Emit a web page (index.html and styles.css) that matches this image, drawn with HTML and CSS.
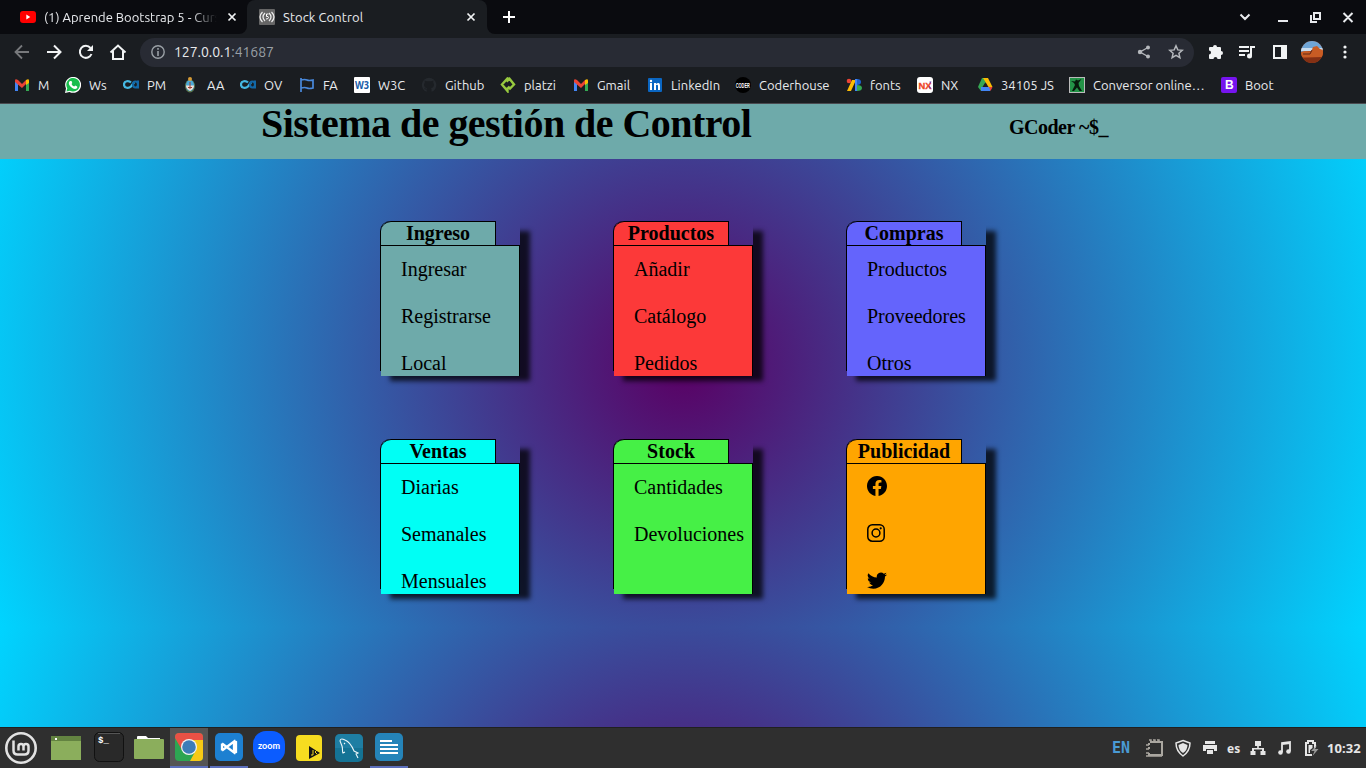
FILE: index.html
```html
<!DOCTYPE html>
<html lang="es">
<head>
<meta charset="utf-8">
<title>Stock Control</title>
<link rel="stylesheet" href="styles.css">
</head>
<body>
<div class="screen">
<svg class="defs" width="0" height="0"><defs>
<g id="close"><path d="M4 4l8 8M12 4l-8 8" stroke="#f1f3f4" stroke-width="2"/></g>
<g id="gmail"><path d="M1 14V4l3 2v8z" fill="#4285f4"/><path d="M12 14V6l3-2v10z" fill="#34a853"/><path d="M1 4c0-2 1-2 3-1l4 4 4-4v4l-4 4-7-6z" fill="#ea4335"/><path d="M12 3c2-1 3-1 3 1v2l-3 2z" fill="#fbbc04"/></g>
<g id="ca" fill="none" stroke-width="2.2"><path d="M8 5.500C6 3.500 1 3.500 1 7.500s5 4 7 2l3-4" stroke="#45b8e2"/><path d="M15 3.500v8M15 7.500c0-4-5-4-5 0s5 4 5 0" stroke="#1268a8"/></g>
</defs></svg>

<header class="browser">
<div class="tabs">
<div class="tab-idle"><svg class="i16" viewBox="0 0 16 16"><rect y="2" width="16" height="12" rx="3" fill="#f00"/><path d="M6.300 5.500v5l4-2.500z" fill="#fff"/></svg><span class="tab-title faded">(1) Aprende Bootstrap 5 - Curs</span><svg class="i14" viewBox="0 0 16 16"><use href="#close"/></svg></div>
<div class="tab-shell"><div class="tab-active"><svg class="i16" viewBox="0 0 16 16"><rect width="16" height="16" rx="1" fill="#666"/><path d="M3.500 3q-5 5 0 10M6 4q-4 4 0 8M12.500 3q5 5 0 10M10 4q4 4 0 8" fill="none" stroke="#eee" stroke-width="1.200"/><path d="M9.500 5h-2v2.500q2-.5 2 1T7 10" fill="none" stroke="#fff"/></svg><span class="tab-title">Stock Control</span><svg class="i14" viewBox="0 0 16 16"><use href="#close"/></svg></div></div>
<div class="strip"><svg class="i16" viewBox="0 0 16 16"><path d="M8 2v12M2 8h12" stroke="#fff" stroke-width="2"/></svg>
<svg class="window-controls" width="120" height="20" viewBox="0 0 120 20" fill="none" stroke="#e8eaed" stroke-width="2"><path d="M4.500 7.500l4.500 4.500 4.500-4.500M42 14h10M107.500 6l9 9M116.500 6l-9 9"/><path d="M78 6h6v6h-6zM75 8v7h6"/></svg></div>
</div>
<div class="toolbar">
<nav class="navigation">
<svg class="i16" viewBox="0 0 16 16" fill="none" stroke="#77797c" stroke-width="1.800"><path d="M15 8H2M8 1.500L1.500 8 8 14.500"/></svg>
<svg class="i16" viewBox="0 0 16 16" fill="none" stroke="#f1f3f4" stroke-width="2"><path d="M1 8h13M8 1.500L14.500 8 8 14.500"/></svg>
<svg class="i16" viewBox="0 0 16 16" fill="none" stroke="#f1f3f4" stroke-width="2"><path d="M13.500 10A6 6 0 1 1 12.500 4"/><path d="M15 1v6H9z" fill="#f1f3f4" stroke="none"/></svg>
<svg class="i18 home" viewBox="0 0 18 18" fill="none" stroke="#f1f3f4" stroke-width="2"><path d="M1.500 9.500L9 2.500l7.500 7M4 8v8h10V8"/></svg>
</nav>
<div class="address"><svg class="i14" viewBox="0 0 14 14"><circle cx="7" cy="7" r="6.200" fill="none" stroke="#9aa0a6" stroke-width="1.400"/><path d="M7 3v1.700M7 6v5" stroke="#9aa0a6" stroke-width="1.600"/></svg><span class="url">127.0.0.1<span class="port">:41687</span></span>
<svg class="i14 share" viewBox="0 0 14 14" fill="#b5b8bc"><path d="M11 2.500L3 7l8 4.500" fill="none" stroke="#b5b8bc" stroke-width="1.400"/><circle cx="11" cy="2.500" r="2"/><circle cx="3" cy="7" r="2.200"/><circle cx="11" cy="11.500" r="2"/></svg>
<svg class="i16" viewBox="0 0 16 16" fill="none" stroke="#b5b8bc" stroke-width="1.500"><path d="M8 1.800l1.800 4.100 4.500.4-3.400 3 1 4.400L8 11.400l-3.900 2.300 1-4.400-3.400-3 4.500-.4z"/></svg></div>
<div class="extensions">
<svg class="i16" viewBox="0 0 16 16" fill="#f1f3f4"><path d="M1 4q0-1 1-1h3a2 2 0 0 1 4 0h3q1 0 1 1v3a2 2 0 0 1 0 4v3q0 1-1 1H9.500a2 2 0 0 0-4 0H2q-1 0-1-1v-3.500a2 2 0 0 0 0-4z"/></svg>
<svg class="i16" viewBox="0 0 16 16" fill="#f1f3f4"><path d="M0 2h10v2H0zM0 6h10v2H0zM0 10h6v2H0zM11 2h5v2h-3v8h-2z"/><circle cx="10.500" cy="12" r="2.500"/></svg>
<svg class="i16 panel" viewBox="0 0 16 16"><path d="M1 1h14v14H1zM3 3v10h6V3z" fill="#f1f3f4" fill-rule="evenodd"/></svg>
<svg class="avatar" viewBox="0 0 22 22"><clipPath id="round"><circle cx="11" cy="11" r="11"/></clipPath><g clip-path="url(#round)"><path d="M0 0h22v22H0z" fill="#b34a1e"/><path d="M0 0h22v8L0 11z" fill="#6fa5d5"/><path d="M0 7h22v3H0z" fill="#c9dced"/><path d="M0 11l4-1 6 1 2-5 4-1 3 3 3 1v7H0z" fill="#c85c24"/><path d="M2 13l7 0 2-4" stroke="#612817" fill="none"/><path d="M0 17l22-1v6H0z" fill="#843014"/></g></svg>
<svg class="i16" viewBox="0 0 16 16" fill="#f1f3f4"><circle cx="7" cy="3" r="1.600"/><circle cx="7" cy="8" r="1.600"/><circle cx="7" cy="13" r="1.600"/></svg>
</div>
</div>
<nav class="bookmarks">
<a><svg class="i16" viewBox="0 0 16 16"><use href="#gmail"/></svg>M</a>
<a><svg class="i16" viewBox="0 0 16 16"><path d="M0 16l1-4.500A8 8 0 1 1 4.500 15z" fill="#fff"/><path d="M1.400 14.600l.9-3.300a6.800 6.800 0 1 1 2.500 2.400z" fill="#18bd4c"/><path d="M5 4l1.500 0 .8 2-.8 1q1 2 2.700 2.600l1-1 2 1v1.300q-2 2-5 0Q3 8 4 5z" fill="#fff"/></svg>Ws</a>
<a><svg class="i16" viewBox="0 0 16 16"><use href="#ca"/></svg>PM</a>
<a><svg class="i16" viewBox="0 0 16 16"><ellipse cx="7" cy="9" rx="5" ry="6.500" fill="#58744d"/><ellipse cx="7" cy="8.500" rx="4" ry="5.500" fill="#4aaada"/><path d="M3 8.500h8q0 3-4 5.500-4-2.500-4-5.500z" fill="#f3ded3"/><circle cx="7" cy="2" r="2" fill="#d59b36"/><path d="M7 5v7M5 10.500h4" stroke="#963e32"/></svg>AA</a>
<a><svg class="i16" viewBox="0 0 16 16"><use href="#ca"/></svg>OV</a>
<a><svg class="i16" viewBox="0 0 16 16" fill="none" stroke="#4989dc" stroke-width="1.700"><path d="M2 1v14M2 3q4-1 6 0t6 0v8q-4 1-6 0t-6 0"/></svg>FA</a>
<a><svg class="i16" viewBox="0 0 16 16"><rect width="16" height="16" rx="1" fill="#fff"/><text x="1" y="12" class="w3" textLength="14" lengthAdjust="spacingAndGlyphs">W3</text></svg>W3C</a>
<a><svg class="i16" viewBox="0 0 16 16"><path d="M8 .8a7.200 7.200 0 0 0-2.300 14v-2.300q-2 .5-2.600-1.200l1.700.2.900.8.2-1.200Q3 10.500 3 7.500l.8-2-.2-2 2.200.8h4.400l2.200-.8-.2 2 .8 2q0 3-3 3.600l.5 1v2.700A7.200 7.200 0 0 0 8 .8z" fill="#25292e"/></svg>Github</a>
<a><svg class="i16" viewBox="0 0 16 16" fill="none" stroke="#98ca3f" stroke-width="2.400"><path d="M6.500 4.500L9.500 1.800 14 7.500l-4 4-2-2M9 2L7.500 1.500 2 7.500l5.500 6.500V10.500"/></svg>platzi</a>
<a><svg class="i16" viewBox="0 0 16 16"><use href="#gmail"/></svg>Gmail</a>
<a><svg class="i16" viewBox="0 0 16 16"><rect x="1" y="1" width="14" height="14" rx="1" fill="#0a66c2"/><path d="M3 6h2v7H3zM7 6h2v1q1-1 2.500-1Q13 6 13 9v4h-2V9q0-2-2-1v5H7z" fill="#fff"/><circle cx="4" cy="4" r="1.200" fill="#fff"/></svg>LinkedIn</a>
<a><svg class="i16" viewBox="0 0 16 16"><circle cx="8" cy="8" r="8" fill="#000"/><text x=".8" y="10.800" class="coder" textLength="14" lengthAdjust="spacingAndGlyphs">CODER</text></svg>Coderhouse</a>
<a><svg class="i16" viewBox="0 0 16 16"><circle cx="3" cy="4" r="2.300" fill="#ea4335"/><path d="M6 3h4L5 14H1z" fill="#fbbc04"/><path d="M9 2h3v12H9z" fill="#4285f4"/><path d="M11 2q4 0 4 3t-4 3z" fill="#1a63d5"/><path d="M11 8q5 0 5 3t-5 3z" fill="#34a853"/></svg>fonts</a>
<a><svg class="i16" viewBox="0 0 16 16"><rect width="16" height="16" rx="3" fill="#fff"/><text x="1.500" y="11.500" class="nx" textLength="13" lengthAdjust="spacingAndGlyphs">NX</text><path d="M12.500 4.500h2l-1.500 2.500zM12 8.500l2.500 3h-2z" fill="#6732a5"/></svg>NX</a>
<a><svg class="i16" viewBox="0 0 16 16"><path d="M5 1h6L4 14l-3-4z" fill="#34a853"/><path d="M6 1h5l4.500 9h-4z" fill="#fbbc04"/><path d="M4 10h11l-2 4H4z" fill="#4285f4"/><path d="M12 10h3.500l-2 4z" fill="#ea4335"/><path d="M8 6l2.500 4h-5z" fill="#1a1d21"/></svg>34105 JS</a>
<a><svg class="i16" viewBox="0 0 16 16"><rect x=".5" y=".5" width="15" height="15" fill="#239347" stroke="#bbb"/><path d="M12.500 2L9.500 6l.5 3 3 5h-2.500L8 10.500l-3 3.500H3l3-6-1-2-3-2 4 .5 1-2 2 1z" fill="#071b0c"/></svg>Conversor online…</a>
<a><svg class="i16" viewBox="0 0 16 16"><rect width="16" height="16" rx="2" fill="#7614ef"/><text x="4" y="12.300" class="boot">B</text></svg>Boot</a>
</nav>
</header>

<main class="page">
<header class="page-header"><h1>Sistema de gestión de Control</h1><p class="brand">GCoder ~$_</p></header>
<section class="folders">
<article class="folder teal"><h2>Ingreso</h2><ul><li>Ingresar</li><li>Registrarse</li><li>Local</li></ul></article>
<article class="folder red"><h2>Productos</h2><ul><li>Añadir</li><li>Catálogo</li><li>Pedidos</li></ul></article>
<article class="folder violet"><h2>Compras</h2><ul><li>Productos</li><li>Proveedores</li><li>Otros</li></ul></article>
<article class="folder cyan"><h2>Ventas</h2><ul><li>Diarias</li><li>Semanales</li><li>Mensuales</li></ul></article>
<article class="folder green"><h2>Stock</h2><ul><li>Cantidades</li><li>Devoluciones</li></ul></article>
<article class="folder orange social"><h2>Publicidad</h2><ul>
<li><svg width="20" height="20" viewBox="0 0 16 16"><path d="M16 8.049c0-4.446-3.582-8.050-8-8.050C3.580 0-.002 3.603-.002 8.050c0 4.017 2.926 7.347 6.750 7.951v-5.625h-2.030V8.050H6.750V6.275c0-2.017 1.195-3.131 3.022-3.131.876 0 1.791.157 1.791.157v1.980h-1.009c-.993 0-1.303.621-1.303 1.258v1.510h2.218l-.354 2.326H9.250V16c3.824-.604 6.750-3.934 6.750-7.951z"/></svg></li>
<li><svg width="18" height="18" viewBox="0 0 18 18" fill="none" stroke="#000" stroke-width="1.500"><rect x=".8" y=".8" width="16.400" height="16.400" rx="4.500"/><circle cx="9" cy="9" r="3.900"/><circle cx="13.700" cy="4.300" r="1.100" fill="#000" stroke="none"/></svg></li>
<li><svg width="20" height="20" viewBox="0 0 16 16"><path d="M5.026 15c6.038 0 9.341-5.003 9.341-9.334 0-.140 0-.282-.006-.422A6.685 6.685 0 0 0 16 3.542a6.658 6.658 0 0 1-1.889.518 3.301 3.301 0 0 0 1.447-1.817 6.533 6.533 0 0 1-2.087.793A3.286 3.286 0 0 0 7.875 6.030a9.325 9.325 0 0 1-6.767-3.429 3.289 3.289 0 0 0 1.018 4.382A3.323 3.323 0 0 1 .640 6.575v.045a3.288 3.288 0 0 0 2.632 3.218 3.203 3.203 0 0 1-.865.115 3.230 3.230 0 0 1-.614-.057 3.283 3.283 0 0 0 3.067 2.277A6.588 6.588 0 0 1 .780 13.580a6.320 6.320 0 0 1-.780-.045A9.344 9.344 0 0 0 5.026 15z"/></svg></li>
</ul></article>
</section>
</main>

<footer class="taskbar">
<div class="launchers">
<span><svg width="32" height="32" viewBox="0 0 32 32" fill="none" stroke="#e2e2e2"><circle cx="16" cy="16" r="14.700" stroke-width="2.600"/><path d="M8.500 8.500v10q0 4 4 4h7q4 0 4-4v-4q0-2.500-2.500-2.500t-2.500 2.500v4M18.500 18.500v-4q0-2.500-2.500-2.500t-2.500 2.500v4" stroke-width="2.500"/></svg></span>
<span><svg width="30" height="24" viewBox="0 0 30 24"><path d="M0 0h30v24H0z" fill="#8bae5c"/><path d="M0 0h30v5H0z" fill="#638341"/><path d="M4 2h2v2H4z" fill="#fff"/></svg></span>
<span class="terminal"><svg width="30" height="30" viewBox="0 0 30 30"><rect x=".5" y=".5" width="29" height="29" rx="5" fill="#292929" stroke="#111"/><path d="M4 1.500h22" stroke="#555"/><text x="4" y="10.500" class="prompt">$_</text></svg></span>
<span class="files"><svg width="30" height="26" viewBox="0 0 30 26"><path d="M3 6V3q0-1 1-1h8l2 2h12v3z" fill="#fff"/><rect y="5" width="30" height="20" rx="1" fill="#8bae5c"/></svg></span>
<span class="running current"><svg width="28" height="28" viewBox="0 0 28 28"><clipPath id="tile"><rect width="28" height="28" rx="4"/></clipPath><g clip-path="url(#tile)"><path d="M0 0h28v28H0z" fill="#2da552"/><path d="M0 0h28v8H14L7 17 0 5z" fill="#e95145"/><path d="M14 7h14v21H15l6-11z" fill="#f6c915"/></g><circle cx="14" cy="14" r="8" fill="#f4f4f4"/><circle cx="14" cy="14" r="6.800" fill="#3d7db8"/></svg></span>
<span class="running"><svg width="28" height="28" viewBox="0 0 28 28"><rect width="28" height="28" rx="5" fill="#1d80d1"/><path d="M7 10.500l12 9V8.500l-12 9M19 8l2 1v10l-2 1M7 10.500v7" fill="none" stroke="#fff" stroke-width="2.300"/></svg></span>
<span class="zoom-app"><svg width="32" height="32" viewBox="0 0 32 32"><rect width="32" height="32" rx="13" fill="#0b5cff"/><text x="5" y="18" class="zoom" textLength="22" lengthAdjust="spacingAndGlyphs">zoom</text></svg></span>
<span><svg width="26" height="26" viewBox="0 0 26 26"><rect width="26" height="26" rx="4" fill="#f6dc20"/><path d="M13 11l11 7-11 6z" fill="#151515"/><path d="M15 20h2v-5M21 15l-2 2 2 2" stroke="#f6dc20" fill="none"/></svg></span>
<span><svg width="28" height="28" viewBox="0 0 28 28"><rect width="28" height="28" rx="5" fill="#147395"/><path d="M0 14h28V5q0-5-5-5H5Q0 0 0 5z" fill="#2889b2" opacity=".5"/><path d="M10 18l-2 1c-1-2 0-4-1-7L5 7c0-3 3-2 5-1 5 2 7 6 9 11l4 2-2 1 2 4M9 9l1 1" fill="none" stroke="#eef7fa" stroke-width="1.100"/></svg></span>
<span class="running"><svg width="28" height="28" viewBox="0 0 28 28"><rect width="28" height="28" rx="5" fill="#2584b9"/><path d="M5 8h12M5 12h18M5 16h18M5 20h18" stroke="#fff" stroke-width="2"/></svg></span>
</div>
<div class="tray">
<span class="lang">EN</span>
<svg width="20" height="20" viewBox="0 0 20 20" fill="none" stroke="#aaa7a0" stroke-width="2"><path d="M5 4h12v13H4v-2M4 5v2M4 9v2"/><path d="M4 2h2v2M8 2h2v2M12 2h2v2M1 7h3M1 11h3M1 15h3M1 18h16" stroke-width="1.500"/></svg>
<svg width="16" height="18" viewBox="0 0 16 18"><path d="M8 1.500l7 2.500q0 8-7 13Q1 12 1 4z" fill="none" stroke="#e6e6e6" stroke-width="1.500"/><path d="M8 4l4.500 2q0 5-4.500 8-4.500-3-4.500-8z" fill="#e6e6e6"/></svg>
<svg width="16" height="16" viewBox="0 0 16 16" fill="#e6e6e6"><path d="M3 1h10v3H3zM1 5h14v6h-3V9H4v2H1zM5 10h6v4H5z"/></svg>
<span class="layout">es</span>
<svg width="16" height="16" viewBox="0 0 16 16" fill="#e6e6e6"><path d="M5 1h6v5H8.800v2H14v3h1.500v4h-5v-4H12V9.500H4V11h1.500v4h-5v-4H2V8h5.200V6H5z"/></svg>
<svg width="16" height="16" viewBox="0 0 16 16"><path d="M5 12V3l8-1v9M5 4l8-1" stroke="#e6e6e6" stroke-width="1.800" fill="none"/><circle cx="3.500" cy="12.500" r="2.300" fill="#e6e6e6"/><circle cx="11.500" cy="11.500" r="2.300" fill="#e6e6e6"/></svg>
<svg width="16" height="18" viewBox="0 0 16 18"><path d="M8 16H2V4h2V2h5v2h2v5" fill="none" stroke="#e6e6e6" stroke-width="2"/><path d="M4.500 6h4v3L6 11v3H4.500z" fill="#e6e6e6"/><path d="M13 6l-6 6h3.500l-2 5 6-7H11z" fill="#999"/></svg>
<time>10:32</time>
</div>
</footer>
</div>
</body>
</html>
```
FILE: styles.css
```css
* { box-sizing: border-box; }
body { margin: 0; overflow: hidden; font-family: "Liberation Serif", "Times New Roman", serif; }
h1, h2, p, ul { margin: 0; padding: 0; }
svg { display: block; flex: none; }
.defs { position: absolute; }
.screen { width: 1366px; height: 768px; display: flex; flex-direction: column; overflow: hidden; }
.i14 { width: 14px; height: 14px; }
.i16 { width: 16px; height: 16px; }
.i18 { width: 18px; height: 18px; }

/* Browser frame */
.browser { height: 104px; background: #1a1d21; border-bottom: 1px solid #4a4b50; color: #e8eaed; font: 13px "Ubuntu", "Noto Sans", sans-serif; }
.tabs { height: 34px; display: flex; }
.tab-idle { width: 247px; padding: 0 8px 0 20px; background: #0a0b0f; border-radius: 0 0 8px 0; display: flex; align-items: center; gap: 8px; }
.tab-title { flex: 1; white-space: nowrap; overflow: hidden; letter-spacing: .08px; }
.faded { letter-spacing: 0; -webkit-mask-image: linear-gradient(90deg, #000 85%, transparent); mask-image: linear-gradient(90deg, #000 85%, transparent); }
.tab-shell { width: 240px; background: linear-gradient(#0a0b0f 50%, #1a1d21 50%); }
.tab-active { height: 34px; padding: 0 9px 0 12px; background: #1a1d21; border-radius: 8px 8px 0 0; display: flex; align-items: center; gap: 8px; }
.strip { flex: 1; padding: 0 10px 0 14px; background: #0a0b0f; border-radius: 0 0 0 8px; display: flex; align-items: center; justify-content: space-between; }
.toolbar { height: 36px; display: flex; align-items: center; }
.navigation { width: 140px; padding-left: 14px; display: flex; align-items: center; gap: 16px; }
.home { margin-left: -1px; }
.address { width: 1054px; height: 29px; padding: 0 10px 0 11px; border-radius: 15px; background: #282b34; display: flex; align-items: center; }
.url { flex: 1; padding: 0 0 1px 9px; font-size: 14px; letter-spacing: -.05px; }
.port { color: #9aa0a6; }
.share { margin-right: 17px; }
.extensions { padding-left: 14px; display: flex; align-items: center; gap: 15px; }
.panel { margin: 0 -2px 0 2px; }
.avatar { width: 22px; height: 22px; }
.bookmarks { height: 31px; padding: 0 0 1px 14px; display: grid; grid-template-columns: 51px 58px 60px 57px 59px 55px 67px 79px 73px 74px 88px 111px 71px 60px 92px 152px auto; }
.bookmarks a { display: flex; align-items: center; gap: 8px; white-space: nowrap; }
.w3 { font: bold 11px "Open Sans", sans-serif; fill: #165ba7; }
.coder { font: bold 7px "Liberation Sans", sans-serif; fill: #fff; }
.nx { font: bold 9px "Liberation Sans", sans-serif; fill: #ee4526; stroke: #ee4526; stroke-width: .3px; }
.boot { font: bold 12px "Liberation Sans", sans-serif; fill: #fff; }

/* Page */
.page { height: 623px; background: radial-gradient(circle, #5a0064 0%, #00d4ff 100%) 0 0 / 100% 523px; }
.page-header { height: 55px; padding-left: 261px; background: #6eaaaa; display: flex; }
.page-header h1 { width: 748px; font-size: 40px; line-height: 40px; letter-spacing: -.54px; white-space: nowrap; }
.brand { padding-top: 12px; font-size: 20px; line-height: 22px; font-weight: bold; letter-spacing: -.5px; }
.folders { padding: 62px 0 0 380px; display: grid; grid-template-columns: repeat(3, 140px); column-gap: 93px; row-gap: 68px; }
.folder { height: 150px; border-left: 1px solid #000; border-radius: 10px 0 0 0; box-shadow: 10px 10px 5px rgba(0, 0, 0, .75); font-size: 20px; }
.folder h2 { width: 115px; height: 24px; border: solid #000; border-width: 1px 1px 0 0; border-radius: 10px 0 0 0; background: var(--paper); font-size: 20px; line-height: 23px; text-align: center; }
.folder ul { height: 131px; border: solid #000; border-width: 1px 1px 0 0; background: var(--paper); padding-left: 20px; list-style: none; }
.folder li { height: 47px; line-height: 47px; display: flex; align-items: center; }
.social li { padding-bottom: 3px; }
.teal { --paper: #6eaaaa; }
.red { --paper: #fc3939; }
.violet { --paper: #6464fc; }
.cyan { --paper: #00fff5; }
.green { --paper: #46f046; }
.orange { --paper: #ffa500; }

/* Desktop panel */
.taskbar { height: 41px; background: #2f2f2f; border-top: 1px solid #202020; display: flex; justify-content: space-between; color: #e6e6e6; font: bold 13px "Noto Sans", sans-serif; }
.launchers { display: grid; grid-template-columns: 42px 47px repeat(8, 40px); }
.launchers span { display: flex; align-items: center; justify-content: center; }
.launchers .running { margin: 0 1px; border-bottom: 2px solid #5b6ebb; }
.launchers .current { background: #555; }
.launchers .zoom-app, .launchers .terminal, .launchers .files { padding-bottom: 2px; }
.zoom { font: bold 9px Lato, sans-serif; fill: #fff; }
.prompt { font: bold 9px "Liberation Mono", monospace; fill: #fff; }
.tray { width: 254px; display: grid; grid-template-columns: 33px 30px 27px 25px 23px 27px 27px 23px auto; align-items: center; }
.lang { color: #4a9ad4; font: bold 15px "DejaVu Sans Mono", monospace; }
.layout { font-size: 12px; }
.tray time { letter-spacing: .1px; }
```
